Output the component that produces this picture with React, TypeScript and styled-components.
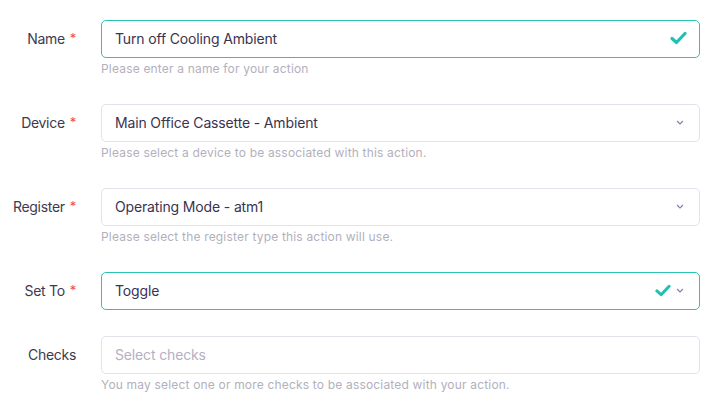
import React from "react"
import styled, { createGlobalStyle } from "styled-components"

const GlobalStyle = createGlobalStyle`
  html, body {
    margin: 0;
    padding: 0;
    background: #ffffff;
    font-family: Inter, "Noto Sans", sans-serif;
  }
`

interface IField {
  label: string
  required?: boolean
  value?: string
  placeholder?: string
  help?: string
  valid?: boolean
  select?: boolean
}

const fields: IField[] = [
  {
    label: "Name",
    required: true,
    value: "Turn off Cooling Ambient",
    help: "Please enter a name for your action",
    valid: true,
  },
  {
    label: "Device",
    required: true,
    value: "Main Office Cassette - Ambient",
    help: "Please select a device to be associated with this action.",
    select: true,
  },
  {
    label: "Register",
    required: true,
    value: "Operating Mode - atm1",
    help: "Please select the register type this action will use.",
    select: true,
  },
  {
    label: "Set To",
    required: true,
    value: "Toggle",
    valid: true,
    select: true,
  },
  {
    label: "Checks",
    placeholder: "Select checks",
    help: "You may select one or more checks to be associated with your action.",
  },
]

const Check: React.FC<{ small?: boolean }> = ({ small }) => (
  <svg width={small ? 16 : 17} height={small ? 15 : 14} viewBox="0 0 17 14">
    <path
      d="M2 7.5 L6.5 11.5 L15 2.5"
      fill="none"
      stroke="#22bfb2"
      strokeWidth="3.2"
      strokeLinecap="round"
      strokeLinejoin="round"
    />
  </svg>
)

const Chevron: React.FC = () => (
  <ChevronWrap>
    <svg width="8" height="5" viewBox="0 0 8 5">
      <path d="M1 1 L4 4 L7 1" fill="none" stroke="#8a80a8" strokeWidth="1.2" />
    </svg>
  </ChevronWrap>
)

const App: React.FC = () => (
  <>
    <GlobalStyle />
    <Form>
      {fields.map((f) => (
        <Row key={f.label}>
          <Label>
            {f.label}
            {f.required && <Star>*</Star>}
          </Label>
          <Control>
            <Box valid={f.valid}>
              <Value placeholder={!f.value}>{f.value || f.placeholder}</Value>
              <Icons>
                {f.valid && <Check small={f.select} />}
                {f.select && <Chevron />}
              </Icons>
            </Box>
            {f.help && <Help>{f.help}</Help>}
          </Control>
        </Row>
      ))}
    </Form>
  </>
)

export default App

const Form = styled.div`
  display: flex;
  flex-direction: column;
  gap: 26px;
  padding: 20px 18px 0 0;
`

const Row = styled.div`
  display: grid;
  grid-template-columns: 76px 1fr;
  column-gap: 25px;
  align-items: start;
`

const Label = styled.div`
  display: flex;
  justify-content: flex-end;
  align-items: center;
  height: 37px;
  font-size: 14px;
  letter-spacing: -0.3px;
  color: #3d3a4e;
  white-space: nowrap;
`

const Star = styled.span`
  color: #f5475a;
  font-size: 13px;
  margin-left: 5px;
  position: relative;
  top: -1px;
`

const Control = styled.div`
  display: flex;
  flex-direction: column;
`

const Box = styled.div<{ valid?: boolean }>`
  box-sizing: border-box;
  height: 38px;
  display: flex;
  align-items: center;
  padding: 0 12px 2px 13px;
  border: 1px solid ${(p) => (p.valid ? "#2cc2b4" : "#e3e1ec")};
  border-radius: 5px;
  background: #fff;
`

const Value = styled.div<{ placeholder?: boolean }>`
  flex: 1;
  font-size: 14px;
  letter-spacing: -0.15px;
  color: ${(p) => (p.placeholder ? "#b4b0c2" : "#3a3350")};
`

const Icons = styled.div`
  display: flex;
  align-items: center;
  gap: 5px;
`

const ChevronWrap = styled.span`
  display: flex;
  margin-right: 3px;
`

const Help = styled.div`
  margin-top: 2px;
  font-size: 12px;
  line-height: 18px;
  letter-spacing: 0.18px;
  color: #b3b0bd;
`
